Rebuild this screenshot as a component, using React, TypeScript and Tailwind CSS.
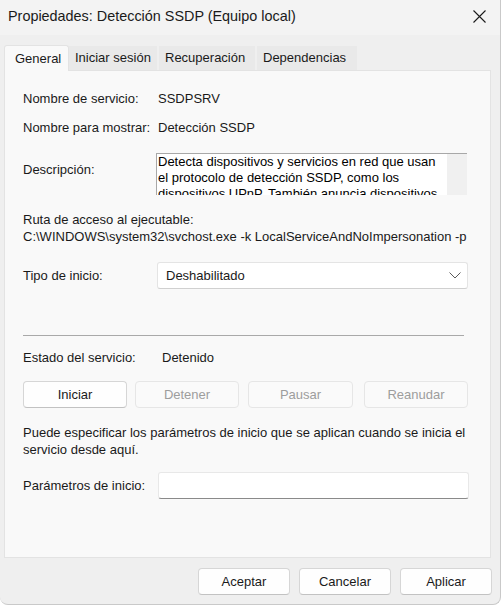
import React from "react";

const font = { fontFamily: '"Liberation Sans", Arial, sans-serif' };

function Tab({ label, active, w }: { label: string; active?: boolean; w: string }) {
  if (active) {
    return (
      <div className={`${w} h-[26px] bg-[#f9f9f9] border-t border-l border-r border-[#e3e3e3] rounded-t-[3px] flex items-center pl-[10px] text-[13px] text-[#1a1a1a] relative z-10 -mb-[1px]`}>
        {label}
      </div>
    );
  }
  return (
    <div className={`${w} h-[24px] bg-[#e9e9e9] flex items-center pl-[6px] text-[13px] text-[#1a1a1a] mr-[2px]`}>
      {label}
    </div>
  );
}

function Btn({ label, disabled, w }: { label: string; disabled?: boolean; w: string }) {
  return (
    <div
      className={`${w} h-[27px] rounded-[4px] flex items-center justify-center text-[13px] ${
        disabled
          ? "bg-[#fafafa] border border-[#e6e6e6] text-[#9d9d9d]"
          : "bg-[#fefefe] border border-[#d6d6d6] border-b-[#c2c2c2] text-[#1a1a1a]"
      }`}
    >
      {label}
    </div>
  );
}

export default function App() {
  return (
    <div className="w-[501px] h-[605px] bg-white overflow-hidden" style={font}>
      <div className="w-[501px] h-[605px] bg-[#efefef] border-r border-b border-[#c9c9c9] rounded-br-[8px] rounded-bl-[8px] flex flex-col">
        {/* Title bar */}
        <div className="h-[35px] bg-[#f3f3f3] flex items-center justify-between pl-[8px] pr-[14px] shrink-0">
          <span className="text-[14.4px] text-[#1a1a1a] leading-none mt-[-2px]">Propiedades: Detección SSDP (Equipo local)</span>
          <svg width="13" height="13" viewBox="0 0 13 13" className="mt-[-3px]">
            <path d="M0.5 0.5 L12.5 12.5 M12.5 0.5 L0.5 12.5" stroke="#1a1a1a" strokeWidth="1.1" />
          </svg>
        </div>

        {/* Tabs */}
        <div className="h-[35px] flex items-end pl-[4px] shrink-0">
          <Tab label="General" active w="w-[65px]" />
          <Tab label="Iniciar sesión" w="w-[88px]" />
          <Tab label="Recuperación" w="w-[96px]" />
          <Tab label="Dependencias" w="w-[100px]" />
        </div>

        {/* Panel */}
        <div className="ml-[4px] w-[487px] h-[488px] bg-[#f9f9f9] border border-[#e3e3e3] shrink-0 pl-[18px] pt-[20px] text-[13px] text-[#1a1a1a]">
          <div className="flex h-[16px] items-center">
            <span className="w-[135px]">Nombre de servicio:</span>
            <span>SSDPSRV</span>
          </div>
          <div className="flex h-[16px] items-center mt-[13px]">
            <span className="w-[135px]">Nombre para mostrar:</span>
            <span>Detección SSDP</span>
          </div>
          <div className="flex mt-[17px]">
            <span className="w-[133px] mt-[9px] h-[16px] flex items-center">Descripción:</span>
            <div className="w-[311px] h-[42px] border-t border-l border-[#a8a8a8] bg-white flex overflow-hidden">
              <div className="flex-1 pl-[1px] leading-[16px] text-[13px] text-black">
                Detecta dispositivos y servicios en red que usan el protocolo de detección SSDP, como los dispositivos UPnP. También anuncia dispositivos
              </div>
              <div className="w-[20px] bg-[#f0f0f0] shrink-0" />
            </div>
          </div>
          <div className="h-[16px] flex items-center mt-[17px]">Ruta de acceso al ejecutable:</div>
          <div className="h-[16px] flex items-center mt-[1px] w-[445px] overflow-hidden whitespace-nowrap">
            C:\WINDOWS\system32\svchost.exe -k LocalServiceAndNoImpersonation -p
          </div>
          <div className="flex items-center mt-[17px]">
            <span className="w-[134px]">Tipo de inicio:</span>
            <div className="w-[311px] h-[27px] bg-white border border-[#e4e4e4] border-b-[#d0d0d0] rounded-[3px] flex items-center justify-between pl-[8px] pr-[6px]">
              <span>Deshabilitado</span>
              <svg width="12" height="7" viewBox="0 0 12 7">
                <path d="M0.5 0.5 L6 6 L11.5 0.5" stroke="#5a5a5a" strokeWidth="1" fill="none" />
              </svg>
            </div>
          </div>
          <div className="w-[441px] h-px bg-[#a9a9a9] mt-[46px]" />
          <div className="flex h-[16px] items-center mt-[14px]">
            <span className="w-[139px]">Estado del servicio:</span>
            <span>Detenido</span>
          </div>
          <div className="flex mt-[15px]">
            <Btn label="Iniciar" w="w-[104px]" />
            <div className="w-[8px]" />
            <Btn label="Detener" disabled w="w-[104px]" />
            <div className="w-[9px]" />
            <Btn label="Pausar" disabled w="w-[105px]" />
            <div className="w-[11px]" />
            <Btn label="Reanudar" disabled w="w-[104px]" />
          </div>
          <div className="mt-[16px] leading-[17px] w-[450px]">
            Puede especificar los parámetros de inicio que se aplican cuando se inicia el servicio desde aquí.
          </div>
          <div className="flex items-center mt-[14px]">
            <span className="w-[135px]">Parámetros de inicio:</span>
            <div className="w-[311px] h-[27px] bg-white border border-[#e8e8e8] border-b-[#8a8a8a] rounded-[3px]" />
          </div>
        </div>

        {/* Bottom buttons */}
        <div className="flex justify-end pr-[8px] mt-[10px]">
          <Btn label="Aceptar" w="w-[92px]" />
          <div className="w-[9px]" />
          <Btn label="Cancelar" w="w-[92px]" />
          <div className="w-[9px]" />
          <Btn label="Aplicar" w="w-[92px]" />
        </div>
      </div>
    </div>
  );
}
